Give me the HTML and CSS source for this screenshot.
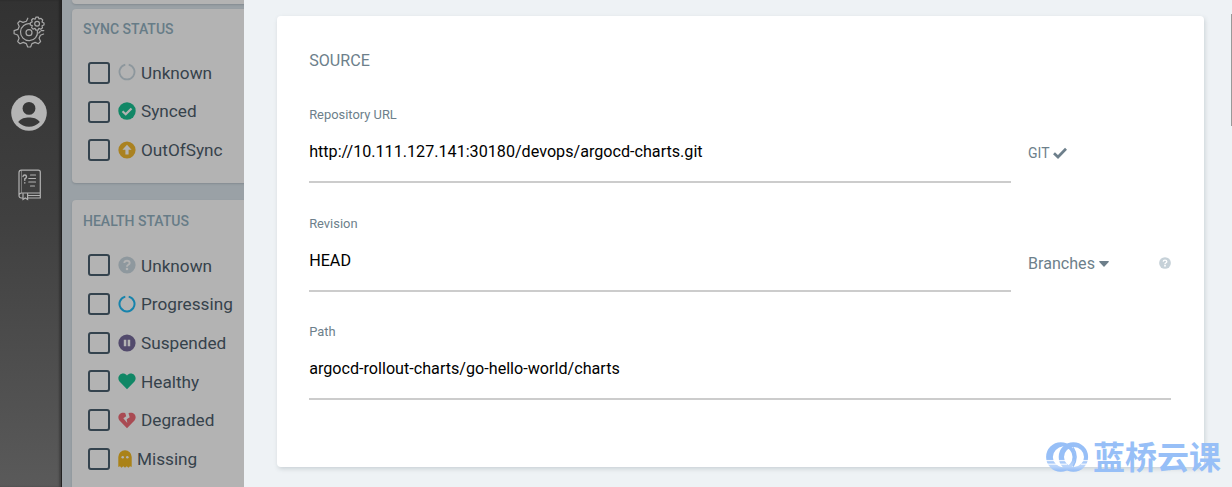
FILE: index.html
```
<!DOCTYPE html>
<html lang="en">
<head>
<meta charset="utf-8">
<title>New application</title>
<link rel="stylesheet" href="styles.css">
</head>
<body>
<div class="app">
  <nav class="nav">
    <svg class="nav-gear" width="32" height="32" viewBox="0 0 32 32" fill="none" stroke="#a8a8a8" stroke-width="1.2" stroke-linejoin="round" stroke-linecap="round">
      <path d="M14.8 2.2 13.4 5.3 10 6.4 6.8 5 4.8 7.2 6.2 10.5 4.9 13.4 1.1 14.6V17.7L4.7 19 6.1 22.3 4.7 25.6 7 27.7 10.3 26.4 13.3 27.6 14.7 31H17.6L19 27.6 22.1 26.4 25.4 27.7 27.6 25.5 26.1 22.2 27.4 19.2 30.6 18M28.2 14.6H30.8"/>
      <path d="M17.5 7.8A8.5 8.5 0 1 0 24.4 14.8"/><circle cx="16" cy="16.7" r="3"/>
      <path d="M23 1.1H25.4L26 3 28 2.4 29.7 4 29 6 31 7V9L29 9.7 29.5 11.8 27.8 13.3 25.8 12.4 25 14.2H22.9L22.1 12.4 20 13.1 18.6 11.6 19.3 9.6 17.3 9V6.8L19.2 6 18.6 4 20.1 2.5 22.1 3.2Z"/><circle cx="24.1" cy="7.8" r="2.4"/>
      <path d="M27.2 15.5 25.8 17"/>
    </svg>
    <svg class="nav-user" width="36" height="36" viewBox="0 0 36 36"><circle cx="18" cy="18" r="17.8" fill="#b5b5b5"/><circle cx="18" cy="13.4" r="6.4" fill="#373737"/><path d="M7.2 27C10 23.3 14 22.5 18 22.5S26 23.3 28.8 27C26 30 22.2 31.7 18 31.7S10 30 7.2 27Z" fill="#393939"/></svg>
    <svg class="nav-docs" width="24" height="32" viewBox="0 0 24 32" fill="none" stroke="#b2b2b2" stroke-width="1.2" stroke-linecap="round">
      <path d="M4.5 29H3.2A2.2 2.2 0 0 1 1 26.8V3.6A2.4 2.4 0 0 1 3.4 1.2H20.3A2 2 0 0 1 22.3 3.2V29H10M1 26.5A2.5 2.5 0 0 1 3.5 24H22.3M10 26.5H22"/>
      <path d="M3.5 24V1.5" stroke-width=".5"/>
      <path d="M5 24.5V30.5L7.3 29 9.6 30.5V24.5"/>
      <path d="M12.5 6H17.5M10.8 9.5H17.5M10.8 13H17.5M12.5 17H16.5"/>
      <path d="M5 7.5Q5.2 6 6.8 6T8.500 7.700Q8.500 9 6.800 9.800V11.300M6.800 13.700V14" stroke-width="1.4"/>
    </svg>
  </nav>
  <aside class="filters">
    <section class="filter-card filter-card--prev"></section>
    <section class="filter-card filter-card--sync">
      <h2 class="filter-title">SYNC STATUS</h2>
      <label class="filter-row"><span class="box"></span><svg class="ico" viewBox="0 0 18 18"><path d="M7.3 1.6A7.5 7.5 0 1 0 10.7 1.6" fill="none" stroke="#8d979d" stroke-width="1.8"/></svg><span class="name">Unknown</span></label>
      <label class="filter-row"><span class="box"></span><svg class="ico" viewBox="0 0 18 18"><circle cx="9" cy="9" r="8.7" fill="#118766"/><path d="M4.5 9.2 7.7 12.3 13.5 6.4" fill="none" stroke="#b3b3b3" stroke-width="2.2"/></svg><span class="name">Synced</span></label>
      <label class="filter-row"><span class="box"></span><svg class="ico" viewBox="0 0 18 18"><circle cx="9" cy="9" r="8.6" fill="#aa8221"/><path d="M9 3.8 13.6 8.7H10.6V13.5H7.4V8.7H4.4Z" fill="#b3b3b3"/></svg><span class="name">OutOfSync</span></label>
    </section>
    <section class="filter-card filter-card--health">
      <h2 class="filter-title">HEALTH STATUS</h2>
      <label class="filter-row"><span class="box"></span><svg class="ico" viewBox="0 0 18 18"><circle cx="9" cy="9" r="8.6" fill="#8e989e"/><path d="M6.3 7Q6.5 4.7 9 4.7T11.7 7Q11.7 8.2 10 9Q9 9.5 9 10.7" fill="none" stroke="#b3b3b3" stroke-width="1.9"/><circle cx="9" cy="13" r="1.25" fill="#b3b3b3"/></svg><span class="name">Unknown</span></label>
      <label class="filter-row"><span class="box"></span><svg class="ico" viewBox="0 0 18 18"><path d="M7.3 1.6A7.5 7.5 0 1 0 10.7 1.6" fill="none" stroke="#1683ac" stroke-width="2"/></svg><span class="name">Progressing</span></label>
      <label class="filter-row"><span class="box"></span><svg class="ico" viewBox="0 0 18 18"><circle cx="9" cy="9" r="8.6" fill="#524a6c"/><path d="M5.8 5.8H8.3V12.3H5.8ZM9.7 5.8H12.2V12.3H9.7Z" fill="#b3b3b3"/></svg><span class="name">Suspended</span></label>
      <label class="filter-row"><span class="box"></span><svg class="ico" viewBox="0 0 18 18"><path d="M9 17.2 1.5 9.5C-2.2 4.7 4-1.5 9 3.4C14-1.5 20.2 4.7 16.5 9.5Z" fill="#118766"/></svg><span class="name">Healthy</span></label>
      <label class="filter-row"><span class="box"></span><svg class="ico" viewBox="0 0 18 18"><path d="M9 17.2 1.5 9.5C-1.8 5.2 2.7 .2 7.3 2.2L8.2 5.3 5.3 7.3 9.3 12 8.7 8.3 11.7 6.3 10.5 2.3C15.5 .2 19.8 5.2 16.5 9.5Z" fill="#a94b53"/></svg><span class="name">Degraded</span></label>
      <label class="filter-row"><span class="box"></span><svg class="ico ico--ghost" viewBox="0 0 14 18"><path d="M.3 7A6.7 6.7 0 0 1 13.7 7V17L12 16.3 10.5 17.7 8.7 16.3 7 17.7 5.3 16.3 3.5 17.7 2 16.3 .3 17Z" fill="#aa8218"/><circle cx="4.7" cy="7.2" r="1.25" fill="#b3b3b3"/><circle cx="9.3" cy="7.2" r="1.25" fill="#b3b3b3"/></svg><span class="name">Missing</span></label>
    </section>
  </aside>
  <main class="panel">
    <section class="card">
      <h1 class="card-title">SOURCE</h1>
      <div class="form-row">
        <div class="field"><div class="label">Repository URL</div><div class="value">http://10.111.127.141:30180/devops/argocd-charts.git</div></div>
        <div class="side side--git">GIT<svg class="check" width="14" height="12" viewBox="0 0 14 12"><path d="M1 6.2 5 10 13 1.7" fill="none" stroke="#6d7f8b" stroke-width="2.7"/></svg></div>
      </div>
      <div class="form-row">
        <div class="field"><div class="label">Revision</div><div class="value">HEAD</div></div>
        <div class="side side--branch">Branches<svg class="caret" width="10" height="6" viewBox="0 0 10 6"><path d="M.5 0H9.5Q10 .5 9.7 1L5.5 5.5Q5 6 4.5 5.5L.3 1Q0 .5 .5 0Z" fill="#6d7f8b"/></svg>
          <svg class="help" width="12" height="12" viewBox="0 0 18 18"><circle cx="9" cy="9" r="8.8" fill="#c6d1d8"/><path d="M6.3 7Q6.5 4.7 9 4.7T11.7 7Q11.7 8.2 10 9Q9 9.5 9 10.7" fill="none" stroke="#fff" stroke-width="2"/><circle cx="9" cy="13.2" r="1.4" fill="#fff"/></svg></div>
      </div>
      <div class="form-row">
        <div class="field"><div class="label">Path</div><div class="value">argocd-rollout-charts/go-hello-world/charts</div></div>
      </div>
    </section>
    <div class="scrollbar"></div>
  </main>
  <div class="watermark">
    <svg width="44" height="30" viewBox="0 0 44 30">
      <defs><linearGradient id="g" gradientUnits="userSpaceOnUse" x1="0" y1="0" x2="0" y2="30"><stop offset=".55" stop-color="#97bff7"/><stop offset=".8" stop-color="#bdd6fa"/><stop offset="1" stop-color="#8db8f5"/></linearGradient></defs>
      <g fill="url(#g)" fill-rule="evenodd">
        <path d="M15.800 .3A14.700 14.700 0 1 0 15.800 29.700A14.700 14.700 0 1 0 15.800 .3ZM18.200 4.300A10.800 10.800 0 0 1 18.200 25.700A12 10.800 0 0 1 18.200 4.300Z"/>
        <path d="M28.400 .3A14.700 14.700 0 1 0 28.400 29.700A14.700 14.700 0 1 0 28.400 .3ZM29 5A10 10 0 1 1 29 25A10 10 0 1 1 29 5Z"/>
      </g>
      <path d="M28 5.500Q34 15 28 24.500" fill="none" stroke="#97bff7" stroke-width="1.600"/>
      <path d="M0 18.700H12M0 22.200H12M14 18.700H21M15 22.200H22M38 18.700H44M36 22.200H43" stroke="#fff" stroke-width="1"/>
    </svg>
    <span class="watermark-text" lang="zh-CN">蓝桥云课</span>
  </div>
</div>
</body>
</html>
```

FILE: styles.css
```
* { box-sizing: border-box; }
body { margin: 0; font-family: Roboto, "Liberation Sans", sans-serif; }
h1, h2 { margin: 0; }
.app { position: relative; display: flex; width: 1232px; height: 487px; overflow: hidden; background: #9aa1a6; }
.nav { width: 62px; flex: none; display: flex; flex-direction: column; align-items: flex-start; padding: 16px 0 0 11px; background: linear-gradient(#323232, #404040 45%, #5a5a5a); border-right: 1px solid #222; box-shadow: inset -2px 0 2px rgba(0,0,0,.25); }
.nav-gear { margin-left: 2px; }
.nav-user { margin-top: 47px; }
.nav-docs { margin: 38px 0 0 7px; }
.filters { width: 182.4px; flex: none; padding-left: 10px; overflow: hidden; }
.filter-card { width: 190px; background: #b3b3b3; border-radius: 4px; box-shadow: 0 1px 2px rgba(80,90,95,.3); }
.filter-card--prev { height: 4px; border-radius: 0 0 4px 4px; }
.filter-card--sync { height: 174px; margin-top: 5px; padding: 11px 0 0 11px; }
.filter-card--health { height: 300px; margin-top: 17px; padding: 12px 0 0 11px; }
.filter-title { height: 18px; line-height: 18px; margin-bottom: 15px; font-size: 14px; font-weight: 500; color: #677c87; }
.filter-card--health .filter-title { margin-bottom: 16px; }
.filter-row { display: flex; align-items: center; height: 38.7px; padding-left: 5px; font-size: 17.2px; color: #36424b; }
.box { width: 22px; height: 22px; flex: none; border: 2px solid #34434e; border-radius: 3px; }
.filter-card--sync .box { margin-top: 1px; }
.ico { width: 18px; height: 18px; flex: none; margin: 0 5px 0 8px; }
.ico--ghost { width: 14px; }
.name { padding-top: .6px; }
.panel { position: relative; flex: 1; background: #eef2f5; padding: 16px 28px 0 32.4px; }
.card { height: 451px; background: #fff; border-radius: 4px; padding: 35px 33px 0 32.4px; box-shadow: 1px 2px 4px rgba(100,115,125,.25); }
.card-title { height: 20px; line-height: 20px; margin-bottom: 26px; font-size: 16.1px; font-weight: 400; color: #6d7f8b; }
.form-row { display: flex; height: 108.5px; }
.field { flex: 1; height: 86px; border-bottom: 2px solid #ccc; }
.label { height: 35px; line-height: 35px; font-size: 12.9px; color: #6d7f8b; }
.value { height: 40px; line-height: 40px; font-size: 16.15px; color: #000; }
.side { width: 160px; flex: none; display: flex; align-items: center; align-self: flex-start; height: 20px; padding-left: 17px; color: #6d7f8b; }
.side--git { margin-top: 46px; font-size: 14px; }
.side--branch { margin-top: 48px; font-size: 16.1px; }
.check { margin: -1px 0 0 3px; }
.caret { margin-left: 4px; }
.help { margin-left: auto; position: relative; top: -1px; }
.scrollbar { position: absolute; right: 0; top: 14px; width: 1px; height: 112px; background: #999; }
.watermark { position: absolute; left: 1045px; top: 441px; display: flex; align-items: center; height: 31px; }
.watermark-text { margin: -3px 0 0 4px; font: 700 32px/31px "Noto Sans CJK SC", sans-serif; color: #97bff7; white-space: nowrap; }
```
